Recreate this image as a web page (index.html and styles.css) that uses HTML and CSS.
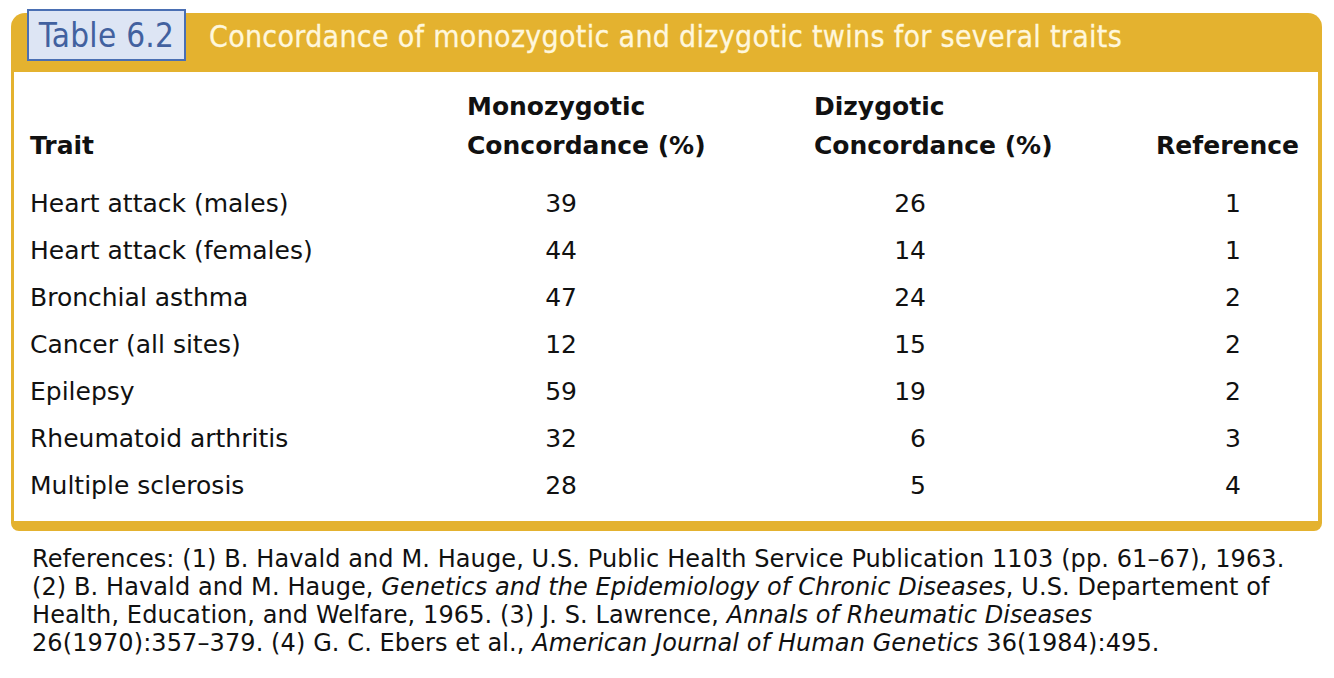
FILE: index.html
```html
<!DOCTYPE html>
<html>
<head>
<meta charset="utf-8">
<link rel="stylesheet" href="styles.css">
</head>
<body>
<div class="page">
  <div class="card">
    <div class="band">
      <div class="label">Table 6.2</div>
      <div class="title">Concordance of monozygotic and dizygotic twins for several traits</div>
    </div>
    <div class="body">
      <div class="grid">
        <div class="th c1">Trait</div>
        <div class="th c2">Monozygotic<br>Concordance (%)</div>
        <div class="th c3">Dizygotic<br>Concordance (%)</div>
        <div class="th c4">Reference</div>

        <div class="td c1">Heart attack (males)</div><div class="td n2">39</div><div class="td n3">26</div><div class="td n4">1</div>
        <div class="td c1">Heart attack (females)</div><div class="td n2">44</div><div class="td n3">14</div><div class="td n4">1</div>
        <div class="td c1">Bronchial asthma</div><div class="td n2">47</div><div class="td n3">24</div><div class="td n4">2</div>
        <div class="td c1">Cancer (all sites)</div><div class="td n2">12</div><div class="td n3">15</div><div class="td n4">2</div>
        <div class="td c1">Epilepsy</div><div class="td n2">59</div><div class="td n3">19</div><div class="td n4">2</div>
        <div class="td c1">Rheumatoid arthritis</div><div class="td n2">32</div><div class="td n3">6</div><div class="td n4">3</div>
        <div class="td c1">Multiple sclerosis</div><div class="td n2">28</div><div class="td n3">5</div><div class="td n4">4</div>
      </div>
    </div>
  </div>
  <p class="notes">References: (1) B. Havald and M. Hauge, U.S. Public Health Service Publication 1103 (pp. 61–67), 1963.<br>(2) B. Havald and M. Hauge, <i>Genetics and the Epidemiology of Chronic Diseases</i>, U.S. Departement of<br>Health, Education, and Welfare, 1965. (3) J. S. Lawrence, <i>Annals of Rheumatic Diseases</i><br>26(1970):357–379. (4) G. C. Ebers et al., <i>American Journal of Human Genetics</i> 36(1984):495.</p>
</div>
</body>
</html>
```

FILE: styles.css
```css
html, body { margin: 0; padding: 0; background: #fff; }
body { font-family: "DejaVu Sans", Verdana, sans-serif; color: #111; }
.page { padding: 13px 12px 0 11px; width: 1311px; }
.card { display: flex; flex-direction: column; }
.band {
  height: 59px;
  background: #e4b22f;
  border-radius: 14px 14px 0 0;
  display: flex;
  align-items: flex-start;
}
.label {
  margin: -4px 0 0 16px;
  width: 155px;
  height: 48px;
  border: 2px solid #4a6fb3;
  background: #dde5f4;
  color: #42619f;
  font-family: "DejaVu Sans Condensed", sans-serif;
  font-size: 33px;
  line-height: 49px;
  text-align: center;
  letter-spacing: 0.3px;
}
.title {
  margin: 5px 0 0 23px;
  color: #fff7dc;
  font-family: "DejaVu Sans Condensed", sans-serif;
  font-size: 30px;
  line-height: 38px;
  letter-spacing: 0.3px;
  -webkit-text-stroke: 0.3px #fff7dc;
}
.body {
  border: solid #e4b22f;
  border-width: 0 4px 10px 3px;
  border-radius: 0 0 8px 8px;
  padding: 15px 0 12px 0;
}
.grid {
  display: grid;
  grid-template-columns: 453px 347px 285px 200px;
  grid-template-rows: 93px;
  grid-auto-rows: 47px;
}
.th {
  font-weight: bold;
  font-size: 25px;
  line-height: 39px;
  height: 78px;
  margin-bottom: 15px;
  grid-row: 1;
  align-self: start;
  white-space: nowrap;
}
.th.c1 { padding-left: 16px; align-self: end; height: 39px; margin-bottom: 15px; }
.th.c4 { text-align: right; align-self: end; height: 39px; margin-bottom: 15px; }
.td { font-size: 25px; line-height: 47px; white-space: nowrap; }
.td.c1 { padding-left: 16px; }
.n2 { width: 110px; text-align: right; }
.n3 { width: 112px; text-align: right; }
.n4 { text-align: right; padding-right: 58px; }
.notes {
  margin: 14px 0 0 21px;
  font-size: 24px;
  line-height: 28px;
  letter-spacing: 0.1px;
  white-space: nowrap;
}
```
